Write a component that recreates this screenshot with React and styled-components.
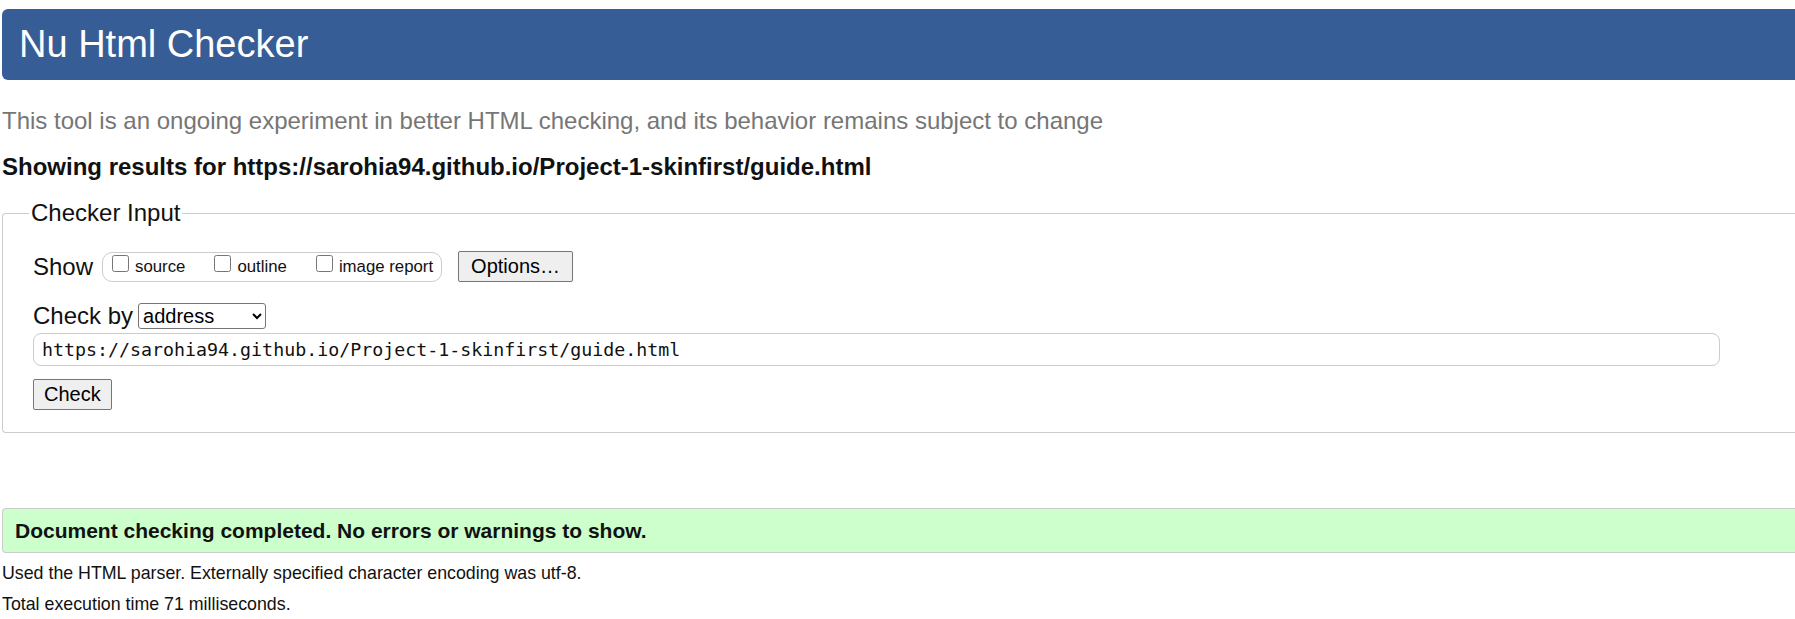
import React from 'react'
import styled, { createGlobalStyle } from 'styled-components'

const GlobalStyle = createGlobalStyle`
html, body {
    margin: 0;
    padding: 0;
    background: #fff;
    overflow: hidden;
}
body {
    font-family: Arial, "Liberation Sans", sans-serif;
    color: #111;
}
`

const Page = styled.div`
width: 1860px;
padding-left: 2px;
`

const Title = styled.h1`
margin: 9px 0 0;
height: 71px;
padding-left: 17px;
background: #365d95;
border-radius: 6px 0 0 6px;
color: #fff;
font-size: 38px;
font-weight: normal;
line-height: 71px;
`

const Lead = styled.p`
margin: 27px 0 0;
color: #767676;
font-size: 24px;
line-height: 28px;
`

const ResultsFor = styled.p`
margin: 18px 0 0;
font-size: 24px;
font-weight: bold;
line-height: 28px;
`

const Fieldset = styled.fieldset`
margin: 18px 0 0;
padding: 24px 0 22px 30px;
border: 1px solid #ccc;
border-right: none;
border-radius: 4px 0 0 4px;
min-width: 0;
`

const Legend = styled.legend`
margin-left: -4px;
padding: 0 2px;
font-size: 24px;
line-height: 28px;
`

const Row = styled.div`
display: flex;
align-items: center;
height: ${props => props.h}px;
margin-top: ${props => props.top || 0}px;
`

const Label = styled.span`
font-size: 24px;
line-height: 28px;
margin-right: ${props => props.gap}px;
`

const ShowGroup = styled.div`
display: flex;
align-items: center;
height: 28px;
padding: 0 8px 0 9px;
border: 1px solid #ccc;
border-radius: 10px;
margin-right: 16px;
`

const Option = styled.label`
display: flex;
align-items: center;
font-size: 16.8px;
margin-left: ${props => props.first ? 0 : 29}px;
`

const Box = styled.input`
width: 17px;
height: 17px;
margin: -7px 6px 0 0;
`

const Button = styled.button`
height: 31px;
padding: 0 ${props => props.pad}px;
font-family: Arial, "Liberation Sans", sans-serif;
font-size: 20px;
color: #000;
background: #efefef;
border: 1px solid #767676;
border-radius: 2px;
`

const Select = styled.select`
width: 128px;
height: 26px;
margin-left: 5px;
font-family: Arial, "Liberation Sans", sans-serif;
font-size: 20px;
color: #000;
border: 1px solid #767676;
border-radius: 3px;
background: #fff;
`

const UrlInput = styled.input`
display: block;
box-sizing: border-box;
width: 1687px;
height: 33px;
margin: 3px 0 13px;
padding: 0 8px;
font-family: "DejaVu Sans Mono", "Liberation Mono", monospace;
font-size: 18.3px;
color: #111;
border: 1px solid #ccc;
border-radius: 8px;
outline: none;
`

const Success = styled.div`
margin-top: 75px;
height: 43px;
padding-left: 12px;
background: #ccffcc;
border: 1px solid #ccc;
border-right: none;
border-radius: 4px 0 0 4px;
font-size: 21px;
font-weight: bold;
line-height: 43px;
`

const Details = styled.p`
margin: 9px 0 0;
font-size: 17.8px;
line-height: 22px;
`

const url = 'https://sarohia94.github.io/Project-1-skinfirst/guide.html'

const App = () => {
  return (
    <Page>
      <GlobalStyle />
      <Title>Nu Html Checker</Title>
      <Lead>This tool is an ongoing experiment in better HTML checking, and its behavior remains subject to change</Lead>
      <ResultsFor>Showing results for {url}</ResultsFor>
      <Fieldset>
        <Legend>Checker Input</Legend>
        <Row h={31}>
          <Label gap={9}>Show</Label>
          <ShowGroup>
            <Option first><Box type="checkbox" />source</Option>
            <Option><Box type="checkbox" />outline</Option>
            <Option><Box type="checkbox" />image report</Option>
          </ShowGroup>
          <Button pad={12}>Options…</Button>
        </Row>
        <Row h={28} top={20}>
          <Label gap={0}>Check by</Label>
          <Select defaultValue="address">
            <option value="address">address</option>
            <option value="file">file upload</option>
            <option value="text">text input</option>
          </Select>
        </Row>
        <UrlInput type="url" defaultValue={url} readOnly />
        <Button pad={10}>Check</Button>
      </Fieldset>
      <Success>Document checking completed. No errors or warnings to show.</Success>
      <Details>Used the HTML parser. Externally specified character encoding was utf-8.</Details>
      <Details>Total execution time 71 milliseconds.</Details>
    </Page>
  )
}

export default App
